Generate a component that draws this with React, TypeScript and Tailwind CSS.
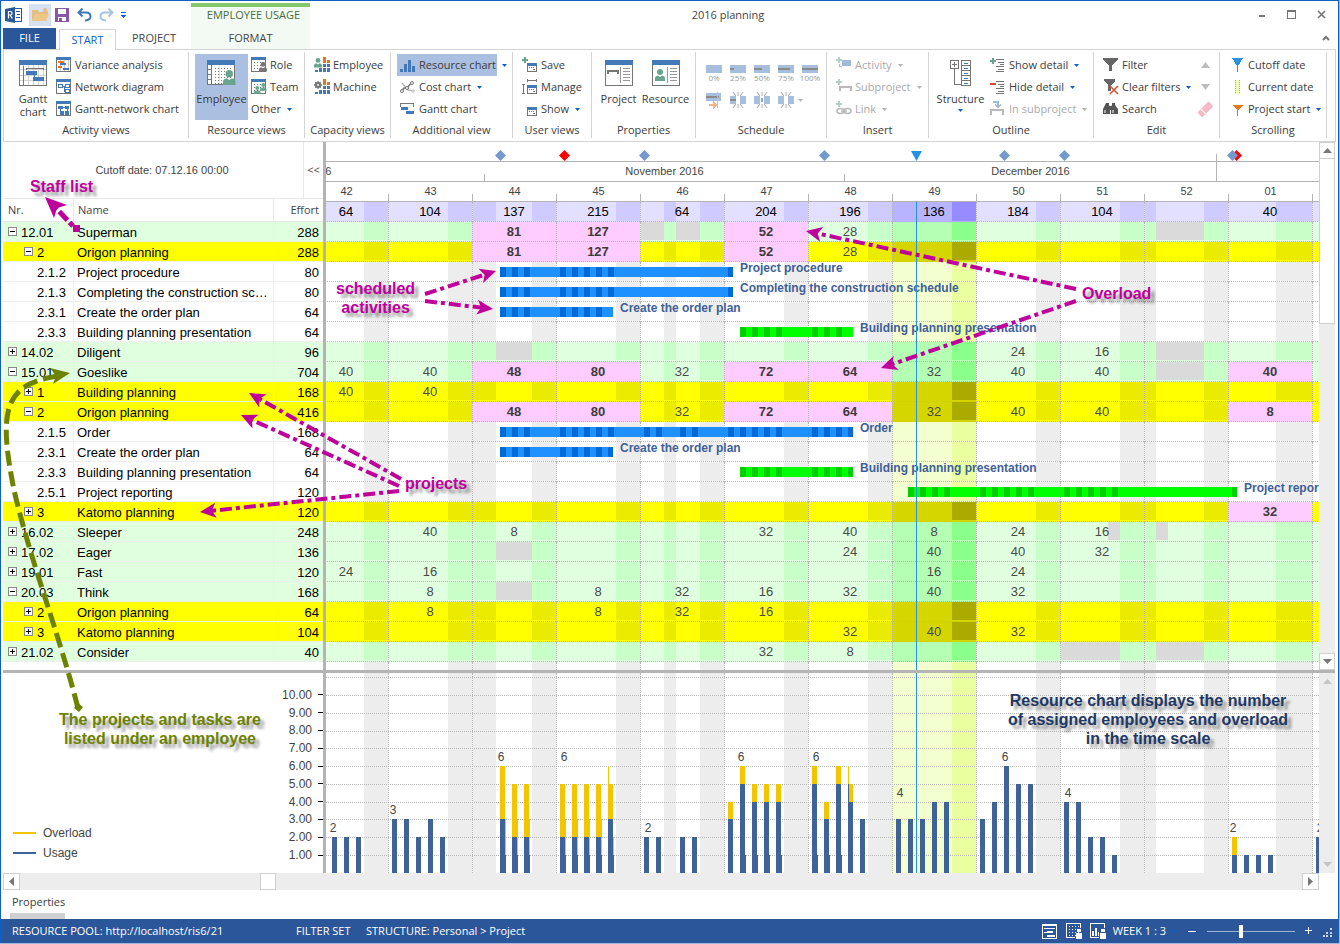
import React from "react";

const B = "#4379b6";
const G = "#757575";
const O = "#e6761c";
const T = "#69a58e";

type Kids = { children?: React.ReactNode };

/* ---------- icons ---------- */

function Ico({ w = 16, h = 16, dim = false, children }: Kids & { w?: number; h?: number; dim?: boolean }) {
  return (
    <svg width={w} height={h} viewBox={`0 0 ${w} ${h}`} className={dim ? "shrink-0 opacity-50" : "shrink-0"} shapeRendering="crispEdges" aria-hidden="true">
      {children}
    </svg>
  );
}

function Person({ x, y, s = 1, c = T }: { x: number; y: number; s?: number; c?: string }) {
  return (
    <g transform={`translate(${x} ${y}) scale(${s})`} fill={c} shapeRendering="auto">
      <circle cx="5" cy="3" r="3" />
      <path d="M0 12V9.500Q0 7 3 6.500L5 8L7 6.500Q10 7 10 9.500V12Z" />
    </g>
  );
}

function Dots({ x, y, nx, ny, g = 3, c = G }: { x: number; y: number; nx: number; ny: number; g?: number; c?: string }) {
  const out: React.ReactNode[] = [];
  for (let i = 0; i < nx; i++) for (let j = 0; j < ny; j++) out.push(<rect key={`${i}-${j}`} x={x + i * g} y={y + j * g} width="1" height="1" fill={c} />);
  return <>{out}</>;
}

function SmallTable({ children }: Kids) {
  return (
    <Ico>
      <rect x="0.5" y="1.5" width="14" height="13" fill="#fff" stroke={G} />
      <rect x="0" y="0" width="15" height="3" fill={B} />
      {children}
    </Ico>
  );
}

const GanttBig = () => (
  <Ico w={28} h={26}>
    <rect x="0.5" y="0.5" width="27" height="25" fill="#fff" stroke={G} />
    <path d="M4.500 5V25M9.500 5V25M14.500 5V25M19.500 5V25M24.500 5V25M1 9.500H27M1 15.500H27M1 20.500H27" stroke="#d2d2d2" />
    <rect width="28" height="5" fill={B} />
    <path d="M4.500 6v19M7.500 10V8.500H24.500V10" stroke={G} fill="none" />
    <rect x="7" y="11" width="11" height="4" fill={B} />
    <rect x="14" y="17" width="11" height="4" fill={B} />
    <path d="M15.500 15v3" stroke={B} />
  </Ico>
);
const EmployeeBig = () => (
  <Ico w={29} h={26}>
    <rect x="0.5" y="0.5" width="27" height="24" fill="#fff" stroke={G} />
    <path d="M4.500 5V24M1 9.500H4M1 14.500H4M1 19.500H4" stroke={G} />
    <Dots x={8} y={8} nx={6} ny={6} />
    <path d="M12.500 5V24" stroke="#ddd" />
    <rect width="28" height="5" fill={B} />
    <Person x={16} y={10} s={1.25} />
  </Ico>
);
const ProjectBig = () => (
  <Ico w={28} h={26}>
    <rect x="0.5" y="0.5" width="27" height="25" fill="#fff" stroke={G} />
    <rect width="28" height="5" fill={B} />
    <path d="M2 10H14V14H12V12H4V14H2Z" fill={G} />
    <path d="M15.500 7V23M18 8.500h7M18 11.500h7M18 14.500h7M18 17.500h7M18 20.500h7" stroke="#999" />
  </Ico>
);
const ResourceBig = () => (
  <Ico w={28} h={26}>
    <rect x="0.5" y="0.5" width="27" height="25" fill="#fff" stroke={G} />
    <rect width="28" height="5" fill={B} />
    <Person x={3} y={9} />
    <path d="M15.500 7V23M18 8.500h7M18 11.500h7M18 14.500h7M18 17.500h7M18 20.500h7" stroke="#999" />
  </Ico>
);
const StructureBig = () => (
  <Ico w={21} h={26}>
    <rect x="0.5" y="0.5" width="8" height="8" fill="#fff" stroke={G} />
    <path d="M2 4.500H7M4.500 2V7M4.500 9V24.500H11" stroke={G} fill="none" />
    <path d="M11.500 0.500H20.500V25.500H11.500ZM11.500 5.500H20.500M11.500 10.500H20.500M11.500 15.500H20.500M11.500 20.500H20.500" stroke={G} fill="none" />
    <path d="M14 3.500h4M14 8.500h4M14 13.500h4M14 18.500h4M14 23.500h4" stroke={B} />
  </Ico>
);

const Variance = () => (
  <SmallTable>
    <path d="M4.500 3V14M8.500 3V14M12.500 3V14" stroke="#ccc" />
    <path d="M2 4h6v2H2zM2 9h4v2H2z" fill={O} />
    <path d="M4 6h6v2H4zM7 11h6v2H7z" fill={B} />
  </SmallTable>
);
const Network = () => (
  <SmallTable>
    <path d="M2.500 5.500h4v3h-4zM9.500 5.500h4v3h-4zM9.500 10.500h4v3h-4zM6.500 7h3M8 7v5h1.500" stroke={B} fill="none" />
  </SmallTable>
);
const GanttNetwork = () => (
  <SmallTable>
    <path d="M2 5h5v3H2zM9 5h4v3H9zM4 10h4v4H4zM9 10h4v4H9z" fill={B} />
    <path d="M4.500 8v3M11.500 8v3M7 6.500h2" stroke={B} />
  </SmallTable>
);
const Role = () => (
  <SmallTable>
    <Dots x={3} y={5} nx={4} ny={3} />
    <Person x={8} y={5} s={0.8} c={G} />
  </SmallTable>
);
const Team = () => (
  <SmallTable>
    <Dots x={3} y={5} nx={4} ny={3} />
    <Person x={9} y={4} s={0.65} />
    <Person x={3} y={7} s={0.65} />
  </SmallTable>
);
const Blocks = () => (
  <>
    <path d="M9 0h3v6H9zM13 3h3v3h-3z" fill={O} />
    <path d="M9 7h3v8H9zM13 7h3v8h-3zM1 13h3v2H1zM5 11h3v4H5z" fill={B} />
    <path d="M9 10.500h7" stroke="#fff" />
  </>
);
const CapEmployee = () => (
  <Ico>
    <Blocks />
    <Person x={0} y={1} s={0.8} />
  </Ico>
);
const CapMachine = () => (
  <Ico>
    <Blocks />
    <g stroke={G} strokeWidth="2" fill="none" shapeRendering="auto">
      <circle cx="4" cy="6" r="2" />
      <path d="M4 2v2M4 8v2M0 6h2M6 6h2M1.200 3.200l1.500 1.500M5.300 7.300l1.500 1.500M6.800 3.200L5.300 4.700M2.700 7.300L1.200 8.800" strokeWidth="1.300" />
    </g>
  </Ico>
);
const ResChart = () => (
  <Ico>
    <path d="M0 12h3v3H0zM4 7h3v8H4zM8 3h3v12H8zM12 9h3v6h-3z" fill={B} />
  </Ico>
);
const CostChart = () => (
  <Ico>
    <g fill="none" shapeRendering="auto">
      <path d="M2 4L8 11L13 12" stroke="#bbb" strokeWidth="1.500" />
      <path d="M1 13L4 9L7 9L12 3" stroke={G} strokeWidth="1.500" />
      <circle cx="2" cy="12" r="1.500" stroke={G} fill="#fff" />
      <circle cx="7" cy="9" r="1.500" stroke={G} fill="#fff" />
      <circle cx="12" cy="4" r="1.500" stroke={G} fill="#fff" />
      <circle cx="13" cy="12" r="1.200" stroke="#bbb" fill="#fff" />
    </g>
  </Ico>
);
const GanttSmall = () => (
  <Ico>
    <path d="M0 2h14v4h-1V3H1v3H0z" fill={G} />
    <path d="M1 6h7v3H1zM6 10h8v3H6z" fill={B} />
  </Ico>
);
const ViewBox = ({ dy = 0 }: { dy?: number }) => (
  <g transform={`translate(0 ${dy})`}>
    <rect x="5.500" y="5.500" width="9" height="8" fill="#fff" stroke={G} />
    <rect x="5" y="5" width="10" height="3" fill={B} />
    <path d="M7 9h1v1H7zM9 9h1v1H9zM11 9h1v1h-1zM11 11h2v1h-2z" fill={G} />
  </g>
);
const SaveView = () => (
  <Ico>
    <path d="M2 0h2v2h2v2H4v2H2V4H0V2h2z" fill={T} />
    <ViewBox dy={1} />
  </Ico>
);
const ManageView = () => (
  <Ico>
    <path d="M5.500 0V3M14.500 0V3M5 1.500H15M0 5.500H3M1.500 5V14M0 14.500H3" stroke={G} />
    <ViewBox dy={1} />
  </Ico>
);
const ShowView = () => (
  <Ico>
    <ViewBox dy={1} />
  </Ico>
);
const PLUS = "M2 0h2v2h2v2H4v2H2V4H0V2h2z";
const InsActivity = () => (
  <Ico dim>
    <path d={PLUS} fill={T} />
    <rect x="6" y="3" width="9" height="6" fill={B} />
    <path d="M3 7v2h3" stroke={B} fill="none" />
  </Ico>
);
const InsSub = () => (
  <Ico dim>
    <path d={PLUS} fill={T} />
    <path d="M3 7h13v5h-2V9H5v3H3z" fill={G} />
  </Ico>
);
const InsLink = () => (
  <Ico dim>
    <path d={PLUS} fill={T} />
    <g fill="none" stroke={G} strokeWidth="1.500" shapeRendering="auto">
      <ellipse cx="4.500" cy="10" rx="3.500" ry="2.500" />
      <ellipse cx="11.500" cy="10" rx="3.500" ry="2.500" />
      <path d="M5 10h6" />
    </g>
  </Ico>
);
const DETAIL = "M6 2.500h8M8 5.500h6M10 7.500h4M6 9.500h8M8 12.500h6M6 14.500h8";
const ShowDetail = () => (
  <Ico>
    <path d={DETAIL} stroke={G} />
    <path d={PLUS} fill={T} transform="translate(0 1)" />
  </Ico>
);
const HideDetail = () => (
  <Ico>
    <path d={DETAIL} stroke={G} />
    <path d="M0 4h6v2H0z" fill="#d24a2c" />
  </Ico>
);
const InSub = () => (
  <Ico dim>
    <path d="M0 8h14v6h-2v-4H2v4H0z" fill={G} />
    <path d="M3 1h5v5M5 3.500L8 6.500L11 3.500" stroke={B} fill="none" strokeWidth="1.500" />
  </Ico>
);
const Funnel = () => (
  <Ico>
    <path d="M0 1H15V3L9 8V14H6V8L0 3Z" fill="#666" />
  </Ico>
);
const ClearFunnel = () => (
  <Ico>
    <path d="M1 0H12V2L8 6V12H5V6L1 2Z" fill="#666" />
    <path d="M7 7L15 15M15 7L7 15" stroke="#d9512c" strokeWidth="1.600" shapeRendering="auto" />
  </Ico>
);
const Binoculars = () => (
  <Ico>
    <g fill="#555" shapeRendering="auto">
      <path d="M3 2h3v2l1 2v7H0V8L2 4zM9 2h3v2l3 4v5H8V6l1-2z" />
      <rect x="6" y="5" width="3" height="4" />
      <path d="M1.500 9h1v3h-1zM9.500 9h1v3h-1z" fill="#fff" />
    </g>
  </Ico>
);
const Eraser = () => (
  <Ico>
    <g transform="rotate(-45 8 8)" shapeRendering="auto">
      <rect x="0" y="5" width="16" height="7" rx="1.500" fill="#f4bcc8" />
      <rect x="4.500" y="5" width="1" height="7" fill="#fff" />
    </g>
  </Ico>
);
const Cutoff = () => (
  <Ico w={11}>
    <path d="M0 1h11L6 9V15H5V9Z" fill="#2593e2" />
  </Ico>
);
const Current = () => (
  <Ico w={11}>
    <rect x="3" y="1" width="5" height="14" fill="#eaffb0" />
    <path d="M3.500 1V15M7.500 1V15" stroke="#aaa" strokeDasharray="1 1" />
  </Ico>
);
const PStart = () => (
  <Ico w={11}>
    <path d="M0 4h11L6 9V15H5V9Z" fill={O} />
  </Ico>
);

function Caret({ dim = false }: { dim?: boolean }) {
  return (
    <svg width="5" height="3" viewBox="0 0 5 3" className="ml-[6px] shrink-0" aria-hidden="true">
      <path d="M0 0H5L2.500 3Z" fill={dim ? "#b4b4b4" : "#0f5fc4"} />
    </svg>
  );
}

/* ---------- ribbon ---------- */

function Item({ icon, label, caret, dim }: { icon?: React.ReactNode; label: string; caret?: boolean; dim?: boolean }) {
  return (
    <button type="button" disabled={dim} className={`flex h-[22px] items-center whitespace-nowrap ${dim ? "text-[#aaaaaa]" : ""}`}>
      {icon && <span className="mr-[3px] flex">{icon}</span>}
      {label}
      {caret && <Caret dim={dim} />}
    </button>
  );
}

function Group({ title, w, children }: Kids & { title: string; w: string }) {
  return (
    <section className={`flex shrink-0 items-start ${w}`} aria-label={title}>
      <div className="min-w-0 flex-1 pt-[2px]">
        <div className="flex h-[66px]">{children}</div>
        <h2 className="text-center leading-[20px]">{title}</h2>
      </div>
      <div className="h-[86px] w-px bg-[#d4d4d4]" />
    </section>
  );
}

function Big({ icon, lines, w, active, caret }: { icon: React.ReactNode; lines: string[]; w: string; active?: boolean; caret?: boolean }) {
  return (
    <button type="button" className={`flex h-[66px] shrink-0 flex-col items-center pt-[6px] ${w} ${active ? "bg-[#abbfe1]" : ""}`}>
      {icon}
      <span className="mt-[6px] flex flex-col leading-[13px]">
        {lines.map((l) => (
          <span key={l}>{l}</span>
        ))}
      </span>
      {caret && (
        <svg width="5" height="3" viewBox="0 0 5 3" className="mt-1" aria-hidden="true">
          <path d="M0 0H5L2.500 3Z" fill="#0f5fc4" />
        </svg>
      )}
    </button>
  );
}

function Percent({ label, w }: { label: string; w: number }) {
  return (
    <button type="button" disabled className="flex w-6 flex-col items-center text-[8px] leading-[10px] text-[#999999]">
      <Ico h={9}>
        <rect y="1" width="16" height="8" fill="#a6bfdc" />
        <rect y="4" width={w} height="2" fill="#8a8a8a" />
      </Ico>
      {label}
    </button>
  );
}

function Split({ kind }: { kind: number }) {
  return (
    <button type="button" disabled aria-label="Split activity" className="flex w-6 justify-center">
      <Ico h={17}>
        {kind === 0 ? (
          <>
            <rect y="1" width="15" height="8" fill="#a6bfdc" />
            <rect y="4" width="13" height="2" fill="#8a8a8a" />
            <path d="M11.500 0V16" stroke="#f0b78c" />
            <path d="M3 12h4v-3l4 4-4 4v-3H3z" fill="#f0b78c" />
          </>
        ) : (
          <>
            <rect y="4" width="6" height="8" fill="#a6bfdc" />
            <rect x="10" y="4" width="6" height="8" fill="#a6bfdc" />
            {kind === 1 && <rect y="7" width="6" height="2" fill="#8a8a8a" />}
            {kind === 2 && <rect x="7" y="6" width="2" height="4" fill="#8aa9cf" />}
            <path d="M8 0V4M8 12V16M3 0L6 4M13 0L10 4M3 16L6 12M13 16L10 12" stroke="#aaa" shapeRendering="auto" />
          </>
        )}
      </Ico>
    </button>
  );
}

function Ribbon() {
  return (
    <div className="ml-[2px] mr-[2px] flex h-[93px] items-start overflow-hidden border border-[#d4d4d4] pt-[2px] text-[#3c3c3c]">
      <Group title="Activity views" w="w-[185px]">
        <Big icon={<GanttBig />} lines={["Gantt", "chart"]} w="w-[52px] pl-[6px]" />
        <div className="flex flex-col items-start">
          <Item icon={<Variance />} label="Variance analysis" />
          <Item icon={<Network />} label="Network diagram" />
          <Item icon={<GanttNetwork />} label="Gantt-network chart" />
        </div>
      </Group>
      <Group title="Resource views" w="w-[116px]">
        <div className="w-[6px] shrink-0" />
        <Big icon={<EmployeeBig />} lines={["Employee"]} w="w-[53px]" active />
        <div className="ml-[3px] flex flex-col items-start">
          <Item icon={<Role />} label="Role" />
          <Item icon={<Team />} label="Team" />
          <Item label="Other" caret />
        </div>
      </Group>
      <Group title="Capacity views" w="w-[86px]">
        <div className="flex flex-col items-start pl-[9px]">
          <Item icon={<CapEmployee />} label="Employee" />
          <Item icon={<CapMachine />} label="Machine" />
        </div>
      </Group>
      <Group title="Additional view" w="w-[122px]">
        <div className="flex flex-col items-start pl-[6px]">
          <div className="flex items-center">
            <div className="bg-[#abbfe1] pl-[3px] pr-px">
              <Item icon={<ResChart />} label="Resource chart" />
            </div>
            <button type="button" aria-label="Resource chart options" className="-ml-px">
              <Caret />
            </button>
          </div>
          <div className="flex flex-col items-start pl-[3px]">
            <Item icon={<CostChart />} label="Cost chart" caret />
            <Item icon={<GanttSmall />} label="Gantt chart" />
          </div>
        </div>
      </Group>
      <Group title="User views" w="w-[79px]">
        <div className="flex flex-col items-start pl-[9px]">
          <Item icon={<SaveView />} label="Save" />
          <Item icon={<ManageView />} label="Manage" />
          <Item icon={<ShowView />} label="Show" caret />
        </div>
      </Group>
      <Group title="Properties" w="w-[104px]">
        <div className="flex w-full justify-center pr-[2px]">
          <Big icon={<ProjectBig />} lines={["Project"]} w="w-[46px]" />
          <Big icon={<ResourceBig />} lines={["Resource"]} w="w-[48px]" />
        </div>
      </Group>
      <Group title="Schedule" w="w-[131px]">
        <div className="flex flex-col gap-[9px] pl-[6px] pt-[10px]">
          <div className="flex">
            <Percent label="0%" w={0} />
            <Percent label="25%" w={4} />
            <Percent label="50%" w={8} />
            <Percent label="75%" w={12} />
            <Percent label="100%" w={16} />
          </div>
          <div className="flex items-center">
            <Split kind={0} />
            <Split kind={1} />
            <Split kind={2} />
            <Split kind={3} />
            <svg width="5" height="3" viewBox="0 0 5 3" aria-hidden="true">
              <path d="M0 0H5L2.500 3Z" fill="#b4b4b4" />
            </svg>
          </div>
        </div>
      </Group>
      <Group title="Insert" w="w-[102px]">
        <div className="flex flex-col items-start pl-[9px]">
          <Item icon={<InsActivity />} label="Activity" caret dim />
          <Item icon={<InsSub />} label="Subproject" caret dim />
          <Item icon={<InsLink />} label="Link" caret dim />
        </div>
      </Group>
      <Group title="Outline" w="w-[165px]">
        <Big icon={<StructureBig />} lines={["Structure"]} w="w-[61px] pl-[2px]" caret />
        <div className="flex flex-col items-start">
          <Item icon={<ShowDetail />} label="Show detail" caret />
          <Item icon={<HideDetail />} label="Hide detail" caret />
          <Item icon={<InSub />} label="In subproject" caret dim />
        </div>
      </Group>
      <Group title="Edit" w="w-[126px]">
        <div className="flex flex-1 flex-col items-start pl-[9px]">
          <Item icon={<Funnel />} label="Filter" />
          <Item icon={<ClearFunnel />} label="Clear filters" caret />
          <Item icon={<Binoculars />} label="Search" />
        </div>
        <div className="flex w-[34px] flex-col items-center">
          <button type="button" disabled aria-label="Previous" className="flex h-[22px] items-center">
            <Ico w={9} h={6}>
              <path d="M0 6L4.500 0L9 6Z" fill="#bdbdbd" shapeRendering="auto" />
            </Ico>
          </button>
          <button type="button" disabled aria-label="Next" className="flex h-[22px] items-center">
            <Ico w={9} h={6}>
              <path d="M0 0L4.500 6L9 0Z" fill="#bdbdbd" shapeRendering="auto" />
            </Ico>
          </button>
          <button type="button" disabled aria-label="Erase" className="flex h-[22px] items-center">
            <Eraser />
          </button>
        </div>
      </Group>
      <Group title="Scrolling" w="w-[107px]">
        <div className="flex flex-col items-start pl-[12px]">
          <Item icon={<span className="mr-[2px]"><Cutoff /></span>} label="Cutoff date" />
          <Item icon={<span className="mr-[2px]"><Current /></span>} label="Current date" />
          <Item icon={<span className="mr-[2px]"><PStart /></span>} label="Project start" caret />
        </div>
      </Group>
    </div>
  );
}

/* ---------- title bar and tabs ---------- */

function Header() {
  return (
    <header className="flex h-[48px] text-[#444444]">
      <div className="w-[190px] shrink-0">
        <div className="flex h-[27px] items-center pl-1">
          <Ico w={17} h={16}>
            <path d="M9 1.500H16.500V14.500H9" stroke="#2b579a" fill="#fff" />
            <path d="M11 4.500h4M12 7.500h3M11 10.500h4" stroke="#2b579a" />
            <path d="M0 2L10 0V16L0 14Z" fill="#2b579a" shapeRendering="auto" />
            <path d="M3.500 11.500V4.500H5.500Q7 4.500 7 6.200Q7 8 5.500 8H3.500M5.300 8L7.200 11.500" stroke="#fff" strokeWidth="1.200" fill="none" shapeRendering="auto" />
          </Ico>
          <button type="button" aria-label="Open" className="ml-[7px] flex h-[22px] w-[22px] items-center justify-center bg-[#d5e1f2]">
            <Ico w={17} h={14}>
              <g shapeRendering="auto">
                <path d="M0 13V2H6L7 4H11L12 0H14L16 4V6H4Z" fill="#e3bd84" />
                <path d="M4 6H17L14 13H0Z" fill="#efc682" />
              </g>
            </Ico>
          </button>
          <button type="button" aria-label="Save" className="ml-1">
            <Ico w={14} h={14}>
              <path d="M0 0h14v14H0z" fill="#8a57a8" />
              <path d="M3 1h8v5H3zM3 9h8v4H3z" fill="#fff" />
              <path d="M4 10h3v3H4z" fill="#8a57a8" />
            </Ico>
          </button>
          <button type="button" aria-label="Undo" className="ml-2">
            <Ico w={15} h={14}>
              <path d="M5.500 0.500L1.500 4.500L5.500 8.500M2 4.500H9Q13.500 4.500 13.500 8.500Q13.500 12 8 12.500" stroke="#3f78b8" strokeWidth="2" fill="none" shapeRendering="auto" />
            </Ico>
          </button>
          <button type="button" aria-label="Redo" className="ml-[7px]">
            <Ico w={15} h={14}>
              <path d="M9.500 0.500L13.500 4.500L9.500 8.500M13 4.500H6Q1.500 4.500 1.500 8.500Q1.500 12 7 12.500" stroke="#a9c3de" strokeWidth="2" fill="none" shapeRendering="auto" />
            </Ico>
          </button>
          <button type="button" aria-label="Customize quick access" className="ml-[7px]">
            <Ico w={5} h={6}>
              <path d="M0 0h5v1H0zM0 3h5L2.500 6z" fill="#0f5fc4" />
            </Ico>
          </button>
        </div>
        <nav className="flex h-[21px] pl-[2px]">
          <button type="button" className="w-[53px] bg-[#2b579a] text-white">FILE</button>
          <button type="button" className="relative z-10 ml-[3px] mt-px h-[21px] w-[57px] border border-b-0 border-[#d4d4d4] bg-white leading-[18px] text-[#0f5fc4]">START</button>
          <button type="button" className="flex-1 pl-px">PROJECT</button>
        </nav>
      </div>
      <div className="mt-[2px] flex w-[119px] shrink-0 flex-col border-t-4 border-[#86c96a] bg-[#f3faf4] text-center">
        <div className="h-[21px] pl-[6px] leading-[15px] text-[#456d3d]">EMPLOYEE USAGE</div>
        <button type="button" className="h-[21px] text-[#444444]">FORMAT</button>
      </div>
      <div className="flex flex-1">
        <h1 className="flex-1 text-center leading-[27px]">2016 planning</h1>
        <div className="flex w-[192px] flex-col items-end pr-[12px]">
          <div className="flex h-[27px] items-center gap-[21px]">
            <button type="button" aria-label="Minimize">
              <Ico w={7} h={10}><path d="M0 5h6v2H0z" fill={G} /></Ico>
            </button>
            <button type="button" aria-label="Maximize">
              <Ico w={9} h={9}><path d="M0.500 0.500h8v8h-8zM0 1.500h9" stroke={G} fill="none" /></Ico>
            </button>
            <button type="button" aria-label="Close">
              <Ico w={9} h={9}><path d="M1 1L8 8M8 1L1 8" stroke={G} strokeWidth="1.600" shapeRendering="auto" /></Ico>
            </button>
          </div>
          <button type="button" aria-label="Collapse ribbon" className="-mr-1 flex h-[20px] items-center">
            <Ico w={8} h={6}><path d="M1 5L4 2L7 5" stroke={G} strokeWidth="2" fill="none" shapeRendering="auto" /></Ico>
          </button>
        </div>
      </div>
    </header>
  );
}

/* ---------- planning data ---------- */

type Week = { no: string; off: number[]; now?: boolean };
const WEEKS: Week[] = [
  { no: "42", off: [5, 6] },
  { no: "43", off: [5, 6] },
  { no: "44", off: [0, 1, 5, 6] },
  { no: "45", off: [5, 6] },
  { no: "46", off: [2, 5, 6] },
  { no: "47", off: [5, 6] },
  { no: "48", off: [5, 6] },
  { no: "49", off: [5, 6], now: true },
  { no: "50", off: [5, 6] },
  { no: "51", off: [5, 6] },
  { no: "52", off: [0, 5, 6] },
  { no: "01", off: [4, 5, 6] },
  { no: "02", off: [5, 6] },
];

type Kind = "person" | "project" | "task" | "total";
type Row = { nr: string; name: string; effort: number; kind: Kind; open?: boolean; v?: string; away?: Record<string, number[]> };

const L52 = [1, 2, 3, 4];
const ROWS: Row[] = [
  { nr: "12.01", name: "Superman", effort: 288, kind: "person", open: true, v: ",,81*,127*,,52*,28", away: { "46": [0, 1, 3, 4], "52": L52 } },
  { nr: "2", name: "Origon planning", effort: 288, kind: "project", open: true, v: ",,81*,127*,,52*,28" },
  { nr: "2.1.2", name: "Project procedure", effort: 80, kind: "task" },
  { nr: "2.1.3", name: "Completing the construction schedule", effort: 80, kind: "task" },
  { nr: "2.3.1", name: "Create the order plan", effort: 64, kind: "task" },
  { nr: "2.3.3", name: "Building planning presentation", effort: 64, kind: "task" },
  { nr: "14.02", name: "Diligent", effort: 96, kind: "person", v: ",,,,,,,,24,16", away: { "44": [2, 3, 4], "52": L52 } },
  { nr: "15.01", name: "Goeslike", effort: 704, kind: "person", open: true, v: "40,40,48*,80*,32,72*,64*,32,40,40,,40*", away: { "52": L52 } },
  { nr: "1", name: "Building planning", effort: 168, kind: "project", v: "40,40" },
  { nr: "2", name: "Origon planning", effort: 416, kind: "project", open: true, v: ",,48*,80*,32,72*,64*,32,40,40,,8*" },
  { nr: "2.1.5", name: "Order", effort: 168, kind: "task" },
  { nr: "2.3.1", name: "Create the order plan", effort: 64, kind: "task" },
  { nr: "2.3.3", name: "Building planning presentation", effort: 64, kind: "task" },
  { nr: "2.5.1", name: "Project reporting", effort: 120, kind: "task" },
  { nr: "3", name: "Katomo planning", effort: 120, kind: "project", v: ",,,,,,,,,,,32*" },
  { nr: "16.02", name: "Sleeper", effort: 248, kind: "person", v: ",40,8,,,32,40,8,24,16", away: { "51": [4], "52": [1] } },
  { nr: "17.02", name: "Eager", effort: 136, kind: "person", v: ",,,,,,24,40,40,32", away: { "44": [2, 3, 4] } },
  { nr: "19.01", name: "Fast", effort: 120, kind: "person", v: "24,16,,,,,,16,24" },
  { nr: "20.03", name: "Think", effort: 168, kind: "person", open: true, v: ",8,,8,32,16,32,40,32", away: { "44": [2, 3, 4] } },
  { nr: "2", name: "Origon planning", effort: 64, kind: "project", v: ",8,,8,32,16" },
  { nr: "3", name: "Katomo planning", effort: 104, kind: "project", v: ",,,,,,32,40,32" },
  { nr: "21.02", name: "Consider", effort: 40, kind: "person", v: ",,,,,32,8", away: { "51": [0, 1, 2, 3, 4], "52": L52 } },
];

const TOTAL: Row = { nr: "", name: "", effort: 0, kind: "total", v: "64,104,137,215,64,204,196,136,184,104,,40" };

const FILL: Record<Kind, [string, string, string, string]> = {
  person: ["bg-[#dfffdf]", "bg-[#c8ffc8]", "bg-[#b5ffb5]", "bg-[#8aff8a]"],
  project: ["bg-[#ffff00]", "bg-[#ebeb00]", "bg-[#d5d500]", "bg-[#aaaa00]"],
  task: ["bg-white", "bg-[#ededed]", "bg-[#f3ffcf]", "bg-[#eaffa0]"],
  total: ["bg-[#e2dfff]", "bg-[#cfcaff]", "bg-[#b9b4ff]", "bg-[#968cff]"],
};

const DAY_COL = ["col-start-1", "col-start-2", "col-start-3", "col-start-4", "col-start-5", "col-start-6", "col-start-7"];

function Days({ week, kind, away }: { week: Week; kind: Kind; away?: number[] }) {
  const f = FILL[kind];
  return (
    <>
      {DAY_COL.map((col, d) => {
        const shade = week.off.includes(d) ? f[week.now ? 3 : 1] : away?.includes(d) ? "bg-[#dadada]" : "";
        return <span key={d} className={`row-start-1 ${col} ${shade}`} />;
      })}
    </>
  );
}

const DAY_GRID = "grid grid-cols-[11px_repeat(6,12px)]";

function TimelineRow({ row }: { row: Row }) {
  const vals = (row.v ?? "").split(",");
  const f = FILL[row.kind];
  return (
    <tr>
      {WEEKS.map((w, i) => {
        const raw = vals[i] ?? "";
        const over = raw.endsWith("*");
        const text = raw.replace("*", "");
        const tone = row.kind === "total" ? "text-black" : over ? "font-bold text-[#3c3c3c]" : "text-[#4a4a4a]";
        return (
          <td key={w.no} className={`h-5 border-b border-l border-dotted border-[#b8b8b8] p-0 ${over ? "bg-[#ffccff]" : f[w.now ? 2 : 0]}`}>
            <div className={`${DAY_GRID} ${row.kind === "task" || row.kind === "total" ? "h-[19px] grid-rows-[19px]" : "mb-px h-[18px] grid-rows-[18px]"}`}>
              {!over && <Days week={w} kind={row.kind} away={row.away?.[w.no]} />}
              <span className={`col-span-7 col-start-1 row-start-1 pr-px text-center leading-[20px] ${tone}`}>{text}</span>
            </div>
          </td>
        );
      })}
    </tr>
  );
}

function Stripes() {
  return (
    <div className="ml-[-22px] flex h-full w-[1092px]">
      {WEEKS.map((w) => (
        <div key={w.no} className={`h-full border-l border-dotted border-[#b8b8b8] ${DAY_GRID} ${FILL.task[w.now ? 2 : 0]}`}>
          <Days week={w} kind="task" />
        </div>
      ))}
    </div>
  );
}

/* Bars are measured in pixels from the left edge of the timeline. */
type Bar = { row: number; from: number; to: number; marks: number[]; green?: boolean; label: string };
const BARS: Bar[] = [
  { row: 2, from: 174, to: 407, marks: [174, 186, 198, 234, 246, 258, 270, 282, 402], label: "Project procedure" },
  { row: 3, from: 174, to: 407, marks: [174, 186, 198, 234, 246, 258, 270, 282, 402], label: "Completing the construction schedule" },
  { row: 4, from: 174, to: 287, marks: [174, 186, 198, 234, 246, 258, 270], label: "Create the order plan" },
  { row: 5, from: 414, to: 527, marks: [414, 426, 438, 450, 486, 498, 510], green: true, label: "Building planning presentation" },
  { row: 10, from: 174, to: 527, marks: [174, 186, 198, 234, 246, 258, 270, 282, 318, 330, 354, 366, 402, 414, 426, 438, 450, 486, 498, 510, 522], label: "Order" },
  { row: 11, from: 174, to: 287, marks: [174, 186, 198, 234, 246, 258, 270, 282], label: "Create the order plan" },
  { row: 12, from: 414, to: 527, marks: [414, 426, 438, 450, 486, 498, 510, 522], green: true, label: "Building planning presentation" },
  { row: 13, from: 582, to: 911, marks: [582, 594, 606, 618, 654, 666, 678, 690, 702, 738, 750, 762, 774, 786, 906], green: true, label: "Project reporting" },
];

function BarLayer() {
  return (
    <>
      {BARS.map((b) => (
        <div key={b.row} className="absolute flex" style={{ top: 20 + b.row * 20, left: b.from }}>
          <svg className="mt-[5px] shrink-0" width={b.to - b.from} height="10" shapeRendering="crispEdges" aria-hidden="true">
            <rect width="100%" height="10" fill={b.green ? "#00ff00" : "#1e90ff"} />
            {b.marks.map((m) => (
              <rect key={m} x={m - b.from} width="6" height="10" fill={b.green ? "#00cf00" : "#006bd6"} />
            ))}
          </svg>
          <span className="ml-[7px] whitespace-nowrap text-[12px] font-bold leading-[12px] text-[#3f6096]">{b.label}</span>
        </div>
      ))}
    </>
  );
}

function Diamond({ x, c }: { x: number; c: string }) {
  return <path d={`M${x - 5.5} 13.500L${x} 8L${x + 5.5} 13.500L${x} 19Z`} fill={c} />;
}

function TimeScale() {
  return (
    <div className="text-[11px] text-[#444444]">
      <div className="h-5 border-b border-[#b4b4b4]">
        <svg width="990" height="19" aria-hidden="true">
          <Diamond x={174.500} c="#7499cc" />
          <Diamond x={238.500} c="#ff0000" />
          <Diamond x={318.500} c="#7499cc" />
          <Diamond x={498.500} c="#7499cc" />
          <path d="M585 9H596L590.500 19Z" fill="#2593e2" />
          <Diamond x={678.500} c="#7499cc" />
          <Diamond x={738.500} c="#7499cc" />
          <Diamond x={910.500} c="#ff0000" />
          <Diamond x={906.500} c="#7499cc" />
        </svg>
      </div>
      <div className="ml-[-214px] flex h-5 w-[1500px] border-b border-[#b4b4b4] text-center leading-[19px]">
        <span className="w-[372px]">October 2016</span>
        <span className="flex w-[360px] items-end">
          <i className="h-[7px] w-px bg-[#b4b4b4]" />
          <span className="flex-1">November 2016</span>
        </span>
        <span className="flex w-[372px] items-end">
          <i className="h-[7px] w-px bg-[#b4b4b4]" />
          <span className="flex-1">December 2016</span>
        </span>
        <i className="-mt-2 h-[27px] w-px bg-[#b4b4b4]" />
      </div>
      <div className="ml-[-22px] flex h-5 w-[1092px] border-b border-[#b4b4b4]">
        {WEEKS.map((w) => (
          <div key={w.no} className="flex w-[84px] items-end">
            <i className="h-[7px] w-px bg-[#b4b4b4]" />
            <span className="flex-1 text-center leading-[19px]">{w.no}</span>
          </div>
        ))}
      </div>
    </div>
  );
}

function Timeline() {
  return (
    <div className="min-w-0 flex-1 overflow-hidden">
      <TimeScale />
      <div className="relative">
        <table className="ml-[-22px] w-[1092px] table-fixed border-separate border-spacing-0 text-[13px]">
          <tbody>
            <TimelineRow row={TOTAL} />
            {ROWS.map((r, i) => (
              <TimelineRow key={i} row={r} />
            ))}
          </tbody>
        </table>
        <div className="h-2">
          <Stripes />
        </div>
        <BarLayer />
        <div className="absolute inset-y-0 left-[590px] w-px bg-[#2593e2]" />
      </div>
    </div>
  );
}

/* ---------- staff list ---------- */

function Box({ open }: { open?: boolean }) {
  return (
    <button type="button" aria-label={open ? "Collapse" : "Expand"} className="mr-1 flex shrink-0">
      <Ico w={9} h={9}>
        <path d="M0.500 0.500h8v8h-8z" fill="#fff" stroke="#888" />
        <path d={open ? "M2 4.500h5" : "M2 4.500h5M4.500 2v5"} stroke="#000" />
      </Ico>
    </button>
  );
}

function StaffList() {
  return (
    <div className="flex w-[320px] shrink-0 flex-col">
      <div className="flex h-[57px] border-b border-[#e8e8e8] text-[11px] text-[#444444]">
        <div className="flex-1 self-center pl-[18px] text-center">Cutoff date: 07.12.16 00:00</div>
        <button type="button" className="w-5 border-l border-[#e8e8e8] font-['Open_Sans',sans-serif]">&lt;&lt;</button>
      </div>
      <table className="w-full table-fixed border-separate border-spacing-0 text-left text-[13px] text-black">
        <colgroup>
          <col className="w-[71px]" />
          <col className="w-[200px]" />
          <col />
        </colgroup>
        <thead className="font-['Open_Sans',sans-serif] text-[11px] text-[#444444]">
          <tr>
            <th className="h-[23px] border-b border-r border-[#e8e8e8] p-0 pl-[5px] font-normal">Nr.</th>
            <th className="border-b border-r border-[#e8e8e8] p-0 pl-1 font-normal">Name</th>
            <th className="border-b border-[#e8e8e8] p-0 pr-1 text-right font-normal">Effort</th>
          </tr>
        </thead>
        <tbody>
          {ROWS.map((r, i) => {
            const pad = r.kind === "person" ? "pl-[5px]" : r.kind === "project" ? "pl-[21px]" : "pl-[34px]";
            return (
              <tr key={i} className={r.kind === "person" ? "bg-[#dfffdf]" : r.kind === "project" ? "bg-[#ffff00]" : "bg-white"}>
                <td className={`h-5 border-b border-r border-[#eeeeee] p-0 ${pad}`}>
                  <div className="flex h-[19px] items-center leading-[21px]">
                    {r.kind !== "task" && <Box open={r.open} />}
                    <span className="pt-px">{r.nr}</span>
                  </div>
                </td>
                <td className="border-b border-r border-[#eeeeee] p-0 pl-[3px] pr-[2px]">
                  <div className="h-[19px] truncate leading-[21px]">{r.name}</div>
                </td>
                <td className="border-b border-[#eeeeee] p-0 pr-1 text-right">
                  <div className="h-[19px] leading-[21px]">{r.effort}</div>
                </td>
              </tr>
            );
          })}
        </tbody>
      </table>
    </div>
  );
}

/* ---------- resource chart ---------- */

const LEVEL = [200, 182, 164, 146, 129, 111, 93, 75, 58, 40, 22, 4];

/* [x, usage, total, height of the side strip's overload part, 1 when a side strip is drawn] */
const USE: [number, number, number, number, number][] = [
  [6, 2, 2, 0, 0], [18, 2, 2, 0, 0], [30, 2, 2, 0, 0],
  [66, 3, 3, 0, 0], [78, 3, 3, 0, 0], [90, 2, 2, 0, 0], [102, 3, 3, 0, 0], [114, 2, 2, 0, 0],
  [174, 3, 6, 3, 1], [186, 2, 5, 3, 1], [198, 2, 5, 3, 1],
  [234, 2, 5, 3, 1], [246, 2, 5, 3, 1], [258, 2, 5, 3, 1], [270, 2, 5, 3, 1], [282, 3, 5, 2, 1],
  [318, 2, 2, 0, 0], [330, 2, 2, 0, 0], [354, 2, 2, 0, 0], [366, 2, 2, 0, 0],
  [402, 3, 4, 0, 0], [414, 5, 6, 0, 1], [426, 4, 5, 0, 1], [438, 4, 5, 0, 1], [450, 4, 5, 0, 1],
  [486, 5, 6, 0, 1], [498, 3, 4, 0, 1], [510, 5, 6, 0, 1], [522, 4, 5, 0, 0], [534, 3, 3, 0, 0],
  [570, 3, 3, 0, 0], [582, 3, 3, 0, 0], [594, 3, 3, 0, 0], [606, 4, 4, 0, 0], [618, 4, 4, 0, 0],
  [654, 3, 3, 0, 0], [666, 4, 4, 0, 0], [678, 6, 6, 0, 0], [690, 5, 5, 0, 0], [702, 5, 5, 0, 0],
  [738, 4, 4, 0, 0], [750, 4, 4, 0, 0], [762, 2, 2, 0, 0], [774, 2, 2, 0, 0], [786, 1, 1, 0, 0],
  [906, 1, 2, 0, 0], [918, 1, 1, 0, 0], [930, 1, 1, 0, 0], [942, 1, 1, 0, 0], [990, 2, 2, 0, 0],
];
const PEAKS: [number, number][] = [[7, 2], [67, 3], [175, 6], [238, 6], [322, 2], [415, 6], [490, 6], [574, 4], [679, 6], [742, 4], [907, 2], [994, 2]];

function ResourceChart() {
  const rect = (x: number, w: number, hi: number, lo: number, c: string, k: string) => (
    <rect key={k} x={x} y={LEVEL[hi]} width={w} height={LEVEL[lo] - LEVEL[hi]} fill={c} />
  );
  const U = "#3f6298";
  const Y = "#f3c500";
  return (
    <div className="relative min-w-0 flex-1 overflow-hidden">
      <Stripes />
      <svg className="absolute left-0 top-0" width="100%" height="200" shapeRendering="crispEdges" role="img" aria-label="Resource usage">
        {LEVEL.slice(1).map((y) => (
          <line key={y} x1="0" x2="100%" y1={y + 0.5} y2={y + 0.5} stroke="#b8b8b8" strokeDasharray="1 1" />
        ))}
        {USE.map(([x, u, t, side, has]) => (
          <g key={x}>
            {rect(x, 5, t, u, Y, "t")}
            {rect(x, 5, u, 0, U, "u")}
            {side > 0 && rect(x + 5, 1, side, 1, Y, "s")}
            {has === 1 && rect(x + 5, 1, 1, 0, U, "b")}
          </g>
        ))}
        {rect(282, 1, 6, 5, Y, "p1")}
        {rect(522, 1, 6, 5, Y, "p2")}
        {rect(522, 1, 5, 4, U, "p3")}
        {PEAKS.map(([x, n]) => (
          <text key={x} x={x} y={LEVEL[n] - 5} textAnchor="middle" fontSize="12" fill="#444">{n}</text>
        ))}
      </svg>
      <div className="absolute inset-y-0 left-[590px] w-px bg-[#2593e2]" />
    </div>
  );
}

function ChartLegend() {
  return (
    <div className="flex h-[200px] w-[320px] shrink-0 text-[12px] text-[#444444]">
      <div className="flex flex-1 flex-col justify-end pb-[10px] pl-[10px]">
        <div className="flex h-5 items-center gap-[7px]"><i className="h-[2px] w-[23px] bg-[#f3c500]" />Overload</div>
        <div className="flex h-5 items-center gap-[7px]"><i className="h-[2px] w-[23px] bg-[#3f6298]" />Usage</div>
      </div>
      <div className="mt-[13px] flex h-[178px] flex-col leading-[16px]">
        {[10, 9, 8, 7, 6, 5, 4, 3, 2, 1].map((n) => (
          <div key={n} className="flex flex-1 items-center justify-end gap-[6px]">
            {n}.00
            <i className="h-px w-[5px] bg-black" />
          </div>
        ))}
      </div>
    </div>
  );
}

/* ---------- scroll bars ---------- */

function Arrow({ dir, c = "#777777" }: { dir: "up" | "down" | "left" | "right"; c?: string }) {
  const d = { up: "M0 7L4.500 2L9 7Z", down: "M0 2L4.500 7L9 2Z", left: "M7 0L2 4.500L7 9Z", right: "M2 0L7 4.500L2 9Z" }[dir];
  return (
    <svg width="9" height="9" viewBox="0 0 9 9" aria-hidden="true">
      <path d={d} fill={c} />
    </svg>
  );
}

const SB = "flex shrink-0 items-center justify-center border border-[#d0d0d0] bg-white";

/* ---------- annotations ---------- */

const P = "#bf009b";

function ArrowLine({ x1, y1, x2, y2 }: { x1: number; y1: number; x2: number; y2: number }) {
  const len = Math.hypot(x2 - x1, y2 - y1);
  const a = (Math.atan2(y2 - y1, x2 - x1) * 180) / Math.PI;
  return (
    <g transform={`translate(${x1} ${y1}) rotate(${a})`}>
      <path d={`M0 0H${len - 12}`} stroke={P} strokeWidth="4" strokeDasharray="12 4 4 4" />
      <path d={`M${len} 0L${len - 16} -7.500L${len - 12} 0L${len - 16} 7.500Z`} fill={P} />
    </g>
  );
}

function Annotations() {
  const base = "absolute whitespace-nowrap text-center text-[16px] font-bold leading-[19px] [text-shadow:4px_4px_3px_rgba(0,0,0,0.4)]";
  return (
    <div className="pointer-events-none absolute inset-0 overflow-hidden font-['Liberation_Sans',Arial,sans-serif]">
      <svg className="absolute left-0 top-0" width="1338" height="943" aria-hidden="true">
        <ArrowLine x1={425} y1={294} x2={496} y2={271} />
        <ArrowLine x1={425} y1={301} x2={493} y2={309} />
        <ArrowLine x1={1076} y1={289} x2={806} y2={231} />
        <ArrowLine x1={1076} y1={301} x2={881} y2={368} />
        <ArrowLine x1={401} y1={479} x2={249} y2={393} />
        <ArrowLine x1={399} y1={486} x2={241} y2={415} />
        <ArrowLine x1={399} y1={491} x2={200} y2={512} />
        <path d="M73 226L54 206" stroke={P} strokeWidth="5" strokeDasharray="5 3 12 3" />
        <path d="M73 225h7v7h-7z" fill={P} />
        <path d="M45 197L67 205L57 208L54 218Z" fill={P} />
        <path d="M78 708C58 630 30 560 14 490C-2 410 4 384 58 376" stroke="#6d8200" strokeWidth="5" strokeDasharray="15 6" fill="none" />
        <path d="M70 373L50 368L56 376L53 384Z" fill="#6d8200" />
        <path d="M78 703L83 707L79 712L74 708Z" fill="#6d8200" />
      </svg>
      <p className={`${base} left-[30px] top-[177px] text-[#bf009b]`}>Staff list</p>
      <p className={`${base} left-[336px] top-[279px] text-[#bf009b]`}>scheduled<br />activities</p>
      <p className={`${base} left-[1082px] top-[284px] text-[#bf009b]`}>Overload</p>
      <p className={`${base} left-[405px] top-[474px] text-[#bf009b]`}>projects</p>
      <p className={`${base} left-[59px] top-[710px] text-[#6d8200]`}>The projects and tasks are<br />listed under an employee</p>
      <p className={`${base} left-[1008px] top-[691px] text-[#1f3864]`}>Resource chart displays the number<br />of assigned employees and overload<br />in the time scale</p>
    </div>
  );
}

/* ---------- status bar ---------- */

function StatusBar() {
  return (
    <footer className="flex h-6 items-center bg-[#2b579a] pl-[11px] pr-[5px] text-white">
      <span className="w-[284px]">RESOURCE POOL: http://localhost/ris6/21</span>
      <span className="w-[70px]">FILTER SET</span>
      <span className="flex-1">STRUCTURE: Personal &gt; Project</span>
      <div className="flex items-center gap-2">
        <button type="button" aria-label="Gantt view">
          <Ico h={15}>
            <path d="M0.500 0.500h14v14h-14z" fill="none" stroke="#fff" />
            <path d="M0 0h15v2H0zM2 4h11v1H2zM5 7h6v2H5zM5 11h8v2H5zM2 8h3v1H2z" fill="#fff" />
          </Ico>
        </button>
        <button type="button" aria-label="Resource view">
          <Ico h={16}>
            <path d="M9 14.500H0.500V0.500H14.500V5" fill="none" stroke="#fff" />
            <Dots x={3} y={3} nx={4} ny={4} c="#fff" />
            <path d="M11 6h4v3h-4zM10 10h6v6h-6z" fill="#fff" />
          </Ico>
        </button>
        <button type="button" aria-label="Chart view">
          <Ico h={16}>
            <path d="M9 14.500H0.500V0.500H14.500V5" fill="none" stroke="#fff" />
            <path d="M2 8h2v5H2zM5 5h2v8H5zM8 9h1v4H8zM11 6h4v3h-4zM10 10h6v6h-6z" fill="#fff" />
          </Ico>
        </button>
      </div>
      <button type="button" className="ml-[7px] flex items-center">
        WEEK 1 : 3
        <Caret />
      </button>
      <button type="button" aria-label="Zoom out" className="ml-[11px]">
        <Ico w={9} h={9}><path d="M0 4.500h8" stroke="#fff" /></Ico>
      </button>
      <input
        type="range"
        aria-label="Zoom"
        min={0}
        max={100}
        defaultValue={38}
        className="mx-[10px] h-[14px] w-[88px] appearance-none bg-transparent [&::-webkit-slider-runnable-track]:h-px [&::-webkit-slider-runnable-track]:bg-[#9db4d4] [&::-webkit-slider-thumb]:-mt-[6px] [&::-webkit-slider-thumb]:h-[13px] [&::-webkit-slider-thumb]:w-[4px] [&::-webkit-slider-thumb]:appearance-none [&::-webkit-slider-thumb]:bg-white"
      />
      <button type="button" aria-label="Zoom in">
        <Ico w={8} h={8}><path d="M0 3.500h7M3.500 0v7" stroke="#fff" /></Ico>
      </button>
      <span className="ml-[10px] mt-[4px]">
        <Ico w={10} h={10}>
          <path d="M7 0h2v2H7zM3 4h2v2H3zM7 4h2v2H7zM0 7h2v2H0zM3 7h2v2H3zM7 7h2v2H7z" fill="#c5d2e6" />
        </Ico>
      </span>
    </footer>
  );
}

/* ---------- page ---------- */

export default function App() {
  return (
    <div className="relative bg-[#9fbbe0] pb-px pr-px font-['Open_Sans',sans-serif] text-[11px]">
      <div className="border-x border-t border-[#0f5fc4] bg-white">
        <Header />
        <Ribbon />
        <main className="pl-[2px] pr-[3px] font-['Liberation_Sans',Arial,sans-serif]">
          <div className="flex">
            <StaffList />
            <div className="w-[3px] shrink-0 bg-[#b4b4b4]" />
            <Timeline />
            <div className="flex w-4 shrink-0 flex-col bg-[#ededed]">
              <button type="button" aria-label="Scroll up" className={`${SB} h-[17px]`}><Arrow dir="up" /></button>
              <div className={`${SB} h-[165px] border-t-0`} />
              <button type="button" aria-label="Scroll down" className={`${SB} mt-auto h-[17px]`}><Arrow dir="down" /></button>
            </div>
          </div>
          <div className="h-[3px] bg-[#b4b4b4]" />
          <div className="flex">
            <ChartLegend />
            <div className="w-[3px] shrink-0 bg-[#b4b4b4]" />
            <ResourceChart />
            <div className="flex w-4 shrink-0 flex-col items-center justify-between bg-[#ededed] py-1">
              <Arrow dir="up" c="#c4c4c4" />
              <Arrow dir="down" c="#c4c4c4" />
            </div>
          </div>
          <div className="mr-4 flex h-[17px] bg-[#ededed]">
            <button type="button" aria-label="Scroll left" className={`${SB} w-[17px]`}><Arrow dir="left" /></button>
            <div className={`${SB} ml-[240px] w-4`} />
            <button type="button" aria-label="Scroll right" className={`${SB} ml-auto w-[17px]`}><Arrow dir="right" /></button>
          </div>
        </main>
        <div className="flex h-[29px] px-[9px] text-[#3c3c3c]">
          <button type="button" className="border-b-[6px] border-[#d0d0d0] px-[2px] pr-0 leading-[23px]">Properties</button>
        </div>
        <StatusBar />
      </div>
      <Annotations />
    </div>
  );
}
